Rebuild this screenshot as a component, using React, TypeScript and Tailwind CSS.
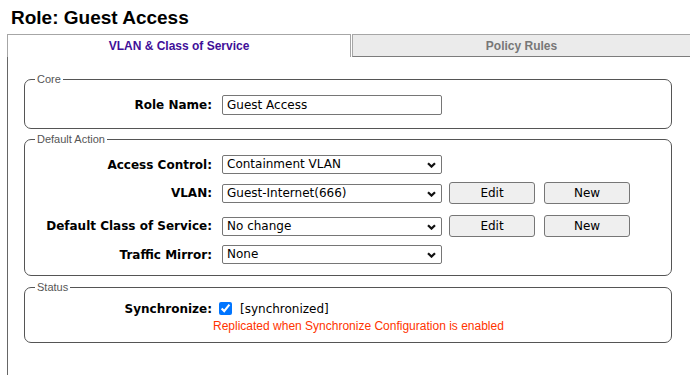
import React from 'react';

const labelCls =
  "w-[187px] shrink-0 text-right font-bold text-[12px] text-black font-['DejaVu_Sans',sans-serif]";
const controlFont = "text-[12px] text-black font-['DejaVu_Sans',sans-serif]";

const Chevron = () => (
  <svg
    width="9"
    height="6"
    viewBox="0 0 9 6"
    className="absolute right-[6px] top-[7px] pointer-events-none"
  >
    <path d="M1 1.2 L4.5 4.6 L8 1.2" fill="none" stroke="#111" strokeWidth="2.2" />
  </svg>
);

const Select = ({ value }: { value: string }) => (
  <div className="relative w-[220px] h-[19px] shrink-0">
    <select
      defaultValue={value}
      className={`block appearance-none w-full h-full border border-[#767676] rounded-[2px] bg-white pl-[4px] py-0 leading-[17px] ${controlFont}`}
    >
      <option>{value}</option>
    </select>
    <Chevron />
  </div>
);

const Btn = ({ label, className = '' }: { label: string; className?: string }) => (
  <button
    className={`w-[86px] h-[22px] shrink-0 border border-[#767676] rounded-[3px] bg-[#efefef] ${controlFont} ${className}`}
  >
    {label}
  </button>
);

const Legend = ({ children }: { children: React.ReactNode }) => (
  <legend className="ml-[10px] px-[2px] text-[11px] leading-[13px] text-[#555] font-['Liberation_Sans',sans-serif]">
    {children}
  </legend>
);

const fieldsetCls = 'w-[648px] border border-[#555] rounded-[7px]';

export default function App() {
  return (
    <div className="relative w-[690px] h-[375px] overflow-hidden bg-white flex flex-col">
      {/* logout link, mostly cut off at the top */}
      <a className="absolute -top-[12px] right-[0px] text-[11px] leading-[13px] text-[#333] underline font-['Liberation_Sans',sans-serif]">
        Logout
      </a>

      <h1 className="mt-[7px] pl-[11px] text-[19px] leading-[22px] font-bold text-black font-['Liberation_Sans',sans-serif]">
        Role: Guest Access
      </h1>

      {/* Tabs */}
      <div className="mt-[5px] ml-[7px] flex h-[23px] font-['Liberation_Sans',sans-serif] text-[12px] font-bold">
        <div className="w-[344px] h-[23px] border-l border-t border-r border-[#a6a6a6] flex items-center justify-center text-[#3f0f99]">
          VLAN &amp; Class of Service
        </div>
        <div className="ml-[1px] flex-1 h-[23px] border-l border-t border-b border-l-[#a6a6a6] border-t-[#a6a6a6] border-b-[#7c7c7c] bg-[#ebebeb] flex items-center justify-center text-[#777]">
          Policy Rules
        </div>
      </div>

      {/* Panel */}
      <div className="flex-1 ml-[7px] border-l border-[#666] pl-[16px] pt-[16px]">
        <fieldset className={`${fieldsetCls} pt-[9px] pb-[13px]`}>
          <Legend>Core</Legend>
          <div className="flex items-center h-[20px]">
            <span className={labelCls}>Role Name:</span>
            <input
              readOnly
              value="Guest Access"
              className={`block ml-[10px] w-[220px] h-[20px] border border-[#767676] rounded-[2px] px-[4px] py-0 ${controlFont}`}
            />
          </div>
        </fieldset>

        <fieldset className={`${fieldsetCls} mt-[4px] pt-[9px] pb-[11px]`}>
          <Legend>Default Action</Legend>
          <div className="flex items-center h-[19px]">
            <span className={labelCls}>Access Control:</span>
            <div className="ml-[10px] flex items-center">
              <Select value="Containment VLAN" />
            </div>
          </div>
          <div className="mt-[8px] flex items-center h-[22px]">
            <span className={labelCls}>VLAN:</span>
            <div className="ml-[10px] flex items-center">
              <Select value="Guest-Internet(666)" />
              <Btn label="Edit" className="ml-[7px]" />
              <Btn label="New" className="ml-[9px]" />
            </div>
          </div>
          <div className="mt-[11px] flex items-center h-[22px]">
            <span className={labelCls}>Default Class of Service:</span>
            <div className="ml-[10px] flex items-center">
              <Select value="No change" />
              <Btn label="Edit" className="ml-[7px]" />
              <Btn label="New" className="ml-[9px]" />
            </div>
          </div>
          <div className="mt-[8px] flex items-center h-[19px]">
            <span className={labelCls}>Traffic Mirror:</span>
            <div className="ml-[10px] flex items-center">
              <Select value="None" />
            </div>
          </div>
        </fieldset>

        <fieldset className={`${fieldsetCls} mt-[5px] pt-[6px] pb-[9px]`}>
          <Legend>Status</Legend>
          <div className="flex items-center h-[17px]">
            <span className={labelCls}>Synchronize:</span>
            <input
              type="checkbox"
              defaultChecked
              className="m-0 ml-[7px] w-[13px] h-[13px] accent-[#0075ff]"
            />
            <span className={`ml-[8px] ${controlFont}`}>[synchronized]</span>
          </div>
          <div className="mt-[2px] ml-[188px] text-[12px] leading-[14px] text-[#ff3300] font-['Liberation_Sans',sans-serif]">
            Replicated when Synchronize Configuration is enabled
          </div>
        </fieldset>
      </div>
    </div>
  );
}
